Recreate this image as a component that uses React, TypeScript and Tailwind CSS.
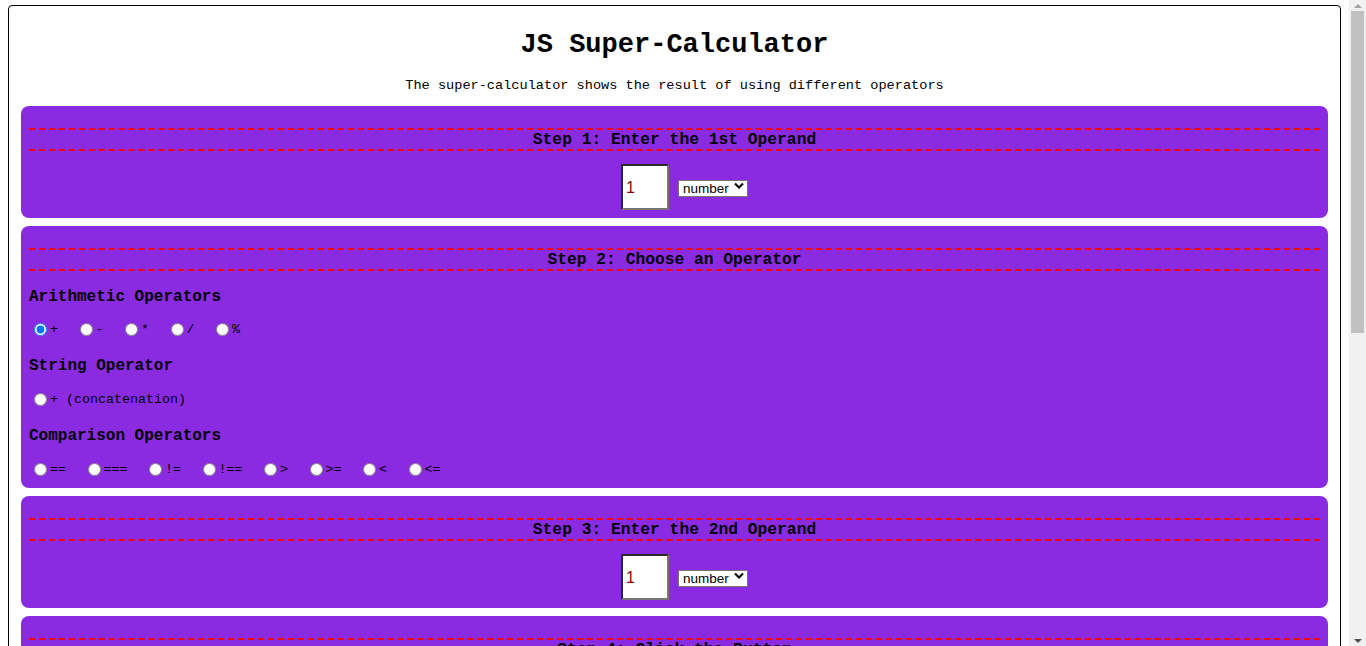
import { useState } from 'react';

const arithmetic = ['+', '-', '*', '/', '%'];
const comparison = ['==', '===', '!=', '!==', '>', '>=', '<', '<='];

function StepHeading({ children }: { children: React.ReactNode }) {
  return (
    <h2 className="border-y-2 border-dashed border-[#ff0000] pt-px text-center text-[16.3px] leading-[18px] font-bold text-black">
      {children}
    </h2>
  );
}

function RadioOption({
  label,
  checked,
  onChange,
}: {
  label: string;
  checked: boolean;
  onChange: () => void;
}) {
  return (
    <label className="mr-[16.5px] flex items-center text-[13.33px] leading-[15px] text-black">
      <input
        type="radio"
        name="operator"
        checked={checked}
        onChange={onChange}
        className="ml-[5px] mr-[3px] h-[13px] w-[13px]"
      />
      <span className="whitespace-pre">{label}</span>
    </label>
  );
}

function OperandRow({ value, onChange }: { value: string; onChange: (v: string) => void }) {
  return (
    <div className="mt-[13px] flex items-center justify-center pl-[20px]">
      <input
        type="text"
        value={value}
        onChange={(e) => onChange(e.target.value)}
        className="h-[46px] w-[48px] border-2 border-solid border-t-[#2b2b2b] border-l-[#2b2b2b] border-r-[#767676] border-b-[#767676] bg-white pl-[3px] pt-[2px] font-['Liberation_Sans',Arial,sans-serif] text-[16px] text-[#8b0000] outline-none"
      />
      <div className="relative ml-[9px] mt-[3px]">
        <select className="h-[17px] w-[70px] appearance-none border border-solid border-[#767676] bg-white pl-[4px] font-['Liberation_Sans',Arial,sans-serif] text-[13.5px] leading-[15px] text-black outline-none">
          <option>number</option>
          <option>string</option>
        </select>
        <svg
          className="pointer-events-none absolute right-[4px] top-[5px] h-[7px] w-[10px]"
          viewBox="0 0 10 7"
          fill="none"
          stroke="#111"
          strokeWidth={2.2}
        >
          <path d="M1 1.5l4 4 4-4" />
        </svg>
      </div>
    </div>
  );
}

function FakeScrollbar() {
  return (
    <div className="flex w-[17px] shrink-0 flex-col items-center bg-[#f1f1f1]">
      <svg className="mt-[4px] h-[4px] w-[8px]" viewBox="0 0 8 4">
        <path d="M0 4L4 0L8 4Z" fill="#a3a3a3" />
      </svg>
      <div className="mt-[3px] h-[322px] w-[13px] bg-[#c1c1c1]" />
      <div className="flex-1" />
      <svg className="mb-[3px] h-[4px] w-[8px]" viewBox="0 0 8 4">
        <path d="M0 0L8 0L4 4Z" fill="#505050" />
      </svg>
    </div>
  );
}

export default function App() {
  const [first, setFirst] = useState('1');
  const [second, setSecond] = useState('1');
  const [operator, setOperator] = useState('a+');

  return (
    <div className="flex h-screen overflow-hidden bg-white">
      <div className="min-w-0 flex-1 pb-6 font-['Liberation_Mono','Courier_New',monospace] text-black">
        <div className="mx-2 mt-[5px] rounded-[4px] border border-black px-3 pb-3">
          {/* Header */}
          <h1 className="mt-[24px] text-center text-[27px] leading-[31px] font-bold">JS Super-Calculator</h1>
          <p className="mt-[17px] text-center text-[13.6px] leading-[16px]">
            The super-calculator shows the result of using different operators
          </p>

          <div className="mt-[12px] flex flex-col gap-2">
            {/* Step 1 */}
            <section className="rounded-lg bg-[#8a2be2] px-2 pt-[22px] pb-2">
              <StepHeading>Step 1: Enter the 1st Operand</StepHeading>
              <OperandRow value={first} onChange={setFirst} />
            </section>

            {/* Step 2 */}
            <section className="rounded-lg bg-[#8a2be2] px-2 pt-[22px] pb-[9px]">
              <StepHeading>Step 2: Choose an Operator</StepHeading>
              <h3 className="mt-[16px] h-[20px] text-[16px] leading-[20px] font-bold">Arithmetic Operators</h3>
              <div className="mt-[12px] flex h-[20px] items-center">
                {arithmetic.map((op) => (
                  <RadioOption key={op} label={op} checked={operator === 'a' + op} onChange={() => setOperator('a' + op)} />
                ))}
              </div>
              <h3 className="mt-[17px] h-[20px] text-[16px] leading-[20px] font-bold">String Operator</h3>
              <div className="mt-[13px] flex h-[20px] items-center">
                <RadioOption label="+ (concatenation)" checked={operator === 's+'} onChange={() => setOperator('s+')} />
              </div>
              <h3 className="mt-[17px] h-[20px] text-[16px] leading-[20px] font-bold">Comparison Operators</h3>
              <div className="mt-[13px] flex h-[20px] items-center">
                {comparison.map((op) => (
                  <RadioOption key={op} label={op} checked={operator === 'c' + op} onChange={() => setOperator('c' + op)} />
                ))}
              </div>
            </section>

            {/* Step 3 */}
            <section className="rounded-lg bg-[#8a2be2] px-2 pt-[22px] pb-2">
              <StepHeading>Step 3: Enter the 2nd Operand</StepHeading>
              <OperandRow value={second} onChange={setSecond} />
            </section>

            {/* Step 4 */}
            <section className="rounded-lg bg-[#8a2be2] px-2 pt-[22px] pb-2">
              <StepHeading>Step 4: Click the Button</StepHeading>
              <div className="mt-[13px] flex justify-center">
                <button className="border border-[#767676] bg-[#efefef] px-2 py-[2px] font-['Liberation_Sans',Arial,sans-serif] text-[13.33px]">
                  Calculate
                </button>
              </div>
            </section>

            {/* Result */}
            <section className="rounded-lg bg-[#8a2be2] px-2 pt-[22px] pb-4">
              <StepHeading>Result</StepHeading>
              <p className="mt-[13px] text-center text-[16px]">&nbsp;</p>
            </section>
          </div>
        </div>
      </div>
      <FakeScrollbar />
    </div>
  );
}
